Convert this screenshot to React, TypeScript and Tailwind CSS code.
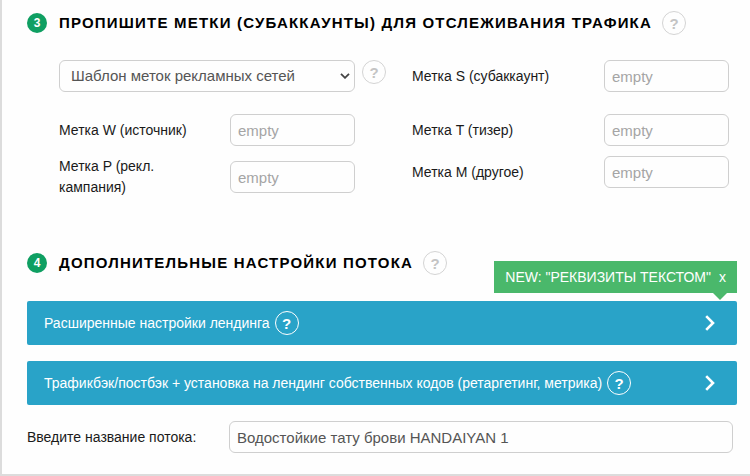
import React, { useState } from 'react';
import clsx from 'clsx';

const leftFields = [
  { id: 'w', label: 'Метка W (источник)' },
  { id: 'p', label: 'Метка P (рекл. кампания)' }
];

const rightFields = [
  { id: 't', label: 'Метка T (тизер)' },
  { id: 'm', label: 'Метка M (другое)' }
];

function HelpButton({ light = false }: { light?: boolean }) {
  return (
    <button
      type="button"
      aria-label="Справка"
      className={clsx(
        'flex size-6 shrink-0 items-center justify-center rounded-full border text-[15px] leading-none font-bold',
        light ? 'border-white text-white' : 'border-[#d4d4d4] text-[#c4c4c4]'
      )}
    >
      ?
    </button>
  );
}

function SectionTitle({ step, children }: { step: number; children: React.ReactNode }) {
  return (
    <div className="flex h-6 items-center">
      <span className="mr-3 flex size-5 shrink-0 items-center justify-center rounded-full bg-[#0f9f62] text-xs font-bold text-white">
        {step}
      </span>
      <h2 className="mr-2.5 text-[15px] leading-6 font-bold tracking-[0.08em] text-black uppercase">{children}</h2>
      <HelpButton />
    </div>
  );
}

function LabelField({ id, label }: { id: string; label: string }) {
  return (
    <div className="flex items-center justify-between">
      <label htmlFor={id} className="max-w-[150px] leading-[21px]">
        {label}
      </label>
      <input
        id={id}
        type="text"
        placeholder="empty"
        className="h-8 w-[125px] shrink-0 rounded-md border border-[#cfcfcf] px-[7px] text-[15px] text-[#555] placeholder:text-[#a5a5a5]"
      />
    </div>
  );
}

function Chevron() {
  return (
    <svg viewBox="0 0 10 16" className="h-4 w-2.5" fill="none" stroke="currentColor" strokeWidth="2.6">
      <path d="M1.2 1.2 8 8l-6.8 6.8" />
    </svg>
  );
}

function SettingsBar({ title, children }: { title: string; children?: React.ReactNode }) {
  const [open, setOpen] = useState(false);

  return (
    <div className="relative flex h-11 items-center rounded-xs bg-[#29a3c8] pr-[22px] pl-[17px] text-white">
      {children}
      <button type="button" onClick={() => setOpen(!open)} aria-expanded={open} className="mr-[5px]">
        {title}
      </button>
      <HelpButton light />
      <button
        type="button"
        aria-label="Развернуть"
        onClick={() => setOpen(!open)}
        className={clsx('ml-auto', open && 'rotate-90')}
      >
        <Chevron />
      </button>
    </div>
  );
}

export default function App() {
  const [hintVisible, setHintVisible] = useState(true);
  const [name, setName] = useState('Водостойкие тату брови HANDAIYAN 1');

  return (
    <main className="border-b-2 border-l-2 border-[#dcdcdc] bg-[#fefefe] pt-[11px] pr-[13px] pb-[21px] pl-[25px] font-['Liberation_Sans',Arial,sans-serif] text-sm text-[#1a1a1a]">
      <section>
        <SectionTitle step={3}>Пропишите метки (субаккаунты) для отслеживания трафика</SectionTitle>

        <div className="mt-[25px] grid grid-cols-[353fr_317fr] pr-2 pl-8">
          <div>
            <div className="mb-[22px] flex items-start gap-[7px] pr-[26px]">
              <div className="relative flex-1">
                <select
                  aria-label="Шаблон меток"
                  className="h-8 w-full appearance-none rounded-md border border-[#cfcfcf] bg-transparent pr-6 pl-[11px] text-[15px] text-[#555]"
                >
                  <option>Шаблон меток рекламных сетей</option>
                </select>
                <svg
                  viewBox="0 0 10 6"
                  className="pointer-events-none absolute top-[13px] right-[5px] h-1.5 w-2.5 text-[#444]"
                  fill="none"
                  stroke="currentColor"
                  strokeWidth="1.8"
                >
                  <path d="M1 .8 5 4.8l4-4" />
                </svg>
              </div>
              <HelpButton />
            </div>
            <div className="flex flex-col gap-2.5 pr-[57px]">
              {leftFields.map((field) => (
                <LabelField key={field.id} {...field} />
              ))}
            </div>
          </div>

          <div>
            <div className="mb-[22px]">
              <LabelField id="s" label="Метка S (субаккаунт)" />
            </div>
            <div className="flex flex-col gap-2.5">
              {rightFields.map((field) => (
                <LabelField key={field.id} {...field} />
              ))}
            </div>
          </div>
        </div>
      </section>

      <section className="mt-[53px]">
        <SectionTitle step={4}>Дополнительные настройки потока</SectionTitle>

        <div className="mt-[26px] flex flex-col gap-4">
          <SettingsBar title="Расширенные настройки лендинга">
            {hintVisible && (
              <div className="absolute right-0 bottom-full mb-2 flex h-8 items-center gap-2 bg-[#4ab86b] px-[11px] whitespace-nowrap">
                <span>NEW: "РЕКВИЗИТЫ ТЕКСТОМ"</span>
                <button type="button" aria-label="Закрыть" onClick={() => setHintVisible(false)}>
                  x
                </button>
                <span className="absolute top-full right-2.5 border-x-7 border-t-7 border-x-transparent border-t-[#4ab86b]" />
              </div>
            )}
          </SettingsBar>
          <SettingsBar title="Трафикбэк/постбэк + установка на лендинг собственных кодов (ретаргетинг, метрика)" />
        </div>

        <div className="mt-4 flex items-center pr-1">
          <label htmlFor="name" className="w-[202px] shrink-0">
            Введите название потока:
          </label>
          <input
            id="name"
            type="text"
            value={name}
            onChange={(e) => setName(e.target.value)}
            className="h-8 min-w-0 flex-1 rounded-md border border-[#cfcfcf] px-[7px] text-[15px] text-[#555]"
          />
        </div>
      </section>
    </main>
  );
}
